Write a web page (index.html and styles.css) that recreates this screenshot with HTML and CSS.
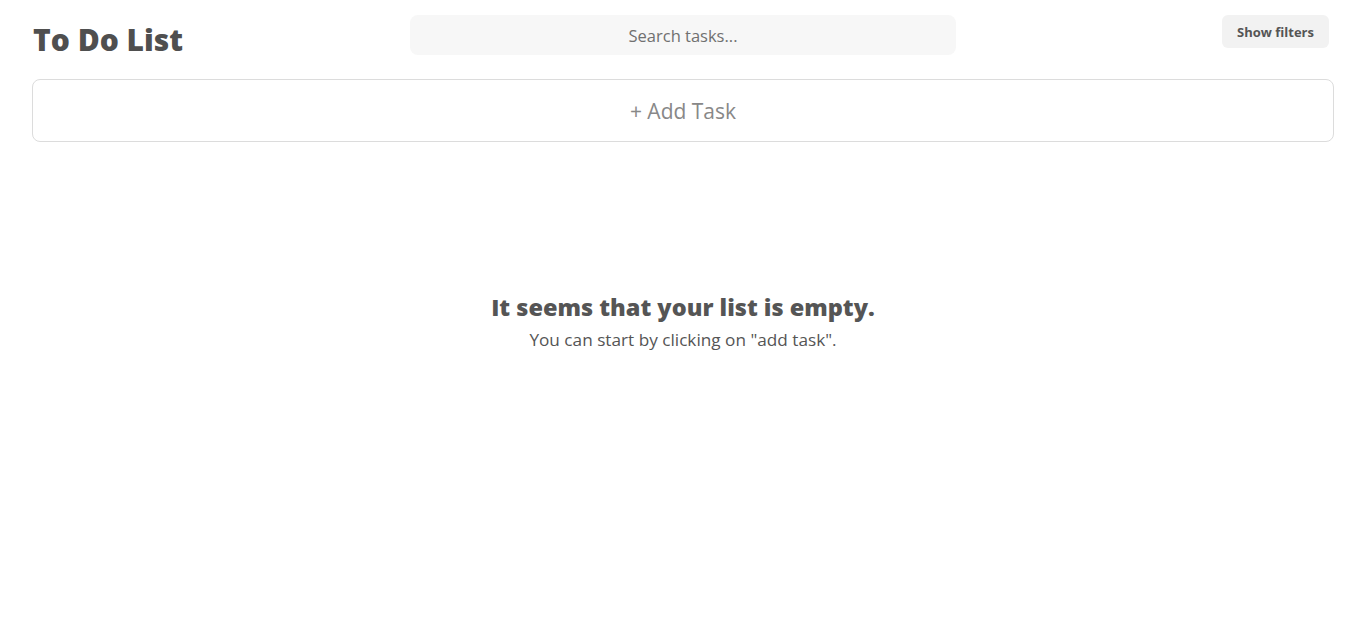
FILE: index.html
```html
<!DOCTYPE html>
<html lang="en">
<head>
<meta charset="utf-8">
<title>To Do List</title>
<link rel="stylesheet" href="styles.css">
</head>
<body>
<div class="page">
  <header class="header">
    <h1 class="title">To Do List</h1>
    <div class="search">Search tasks...</div>
    <div class="actions"><button class="filters">Show filters</button></div>
  </header>
  <button class="add-task">+ Add Task</button>
  <section class="empty">
    <h2 class="empty-title">It seems that your list is empty.</h2>
    <p class="empty-text">You can start by clicking on "add task".</p>
  </section>
</div>
</body>
</html>
```

FILE: styles.css
```css
* { box-sizing: border-box; }
html, body { margin: 0; padding: 0; background: #fff; }
body { font-family: "Open Sans", "Noto Sans", sans-serif; color: #555; }
.page { padding: 15px 31px 0 32px; }
.header {
  display: grid;
  grid-template-columns: 1fr 546px 1fr;
  align-items: start;
}
.title {
  margin: 5px 0 0 1px;
  font-size: 30px;
  font-weight: 800;
  line-height: 40px;
  color: #4f4f4f;
}
.search {
  height: 40px;
  border-radius: 8px;
  background: #f7f7f7;
  display: flex;
  align-items: center;
  justify-content: center;
  font-size: 16.5px;
  color: #707070;
}
.actions { display: flex; justify-content: flex-end; padding-right: 5px; }
.filters {
  border: none;
  height: 33px;
  padding: 0 15px;
  border-radius: 6px;
  background: #f2f2f2;
  font-family: inherit;
  font-size: 13px;
  font-weight: 700;
  color: #555;
}
.add-task {
  display: block;
  width: 100%;
  margin-top: 19px;
  height: 63px;
  border: 1px solid #dcdcdc;
  border-radius: 8px;
  background: #fff;
  font-family: inherit;
  font-size: 21px;
  color: #888;
}
.empty { text-align: center; margin-top: 149px; }
.empty-title {
  margin: 0;
  font-size: 23.5px;
  line-height: 32px;
  font-weight: 800;
  color: #555;
}
.empty-text { margin: 5px 0 0; font-size: 17.2px; line-height: 24px; color: #555; }
```
